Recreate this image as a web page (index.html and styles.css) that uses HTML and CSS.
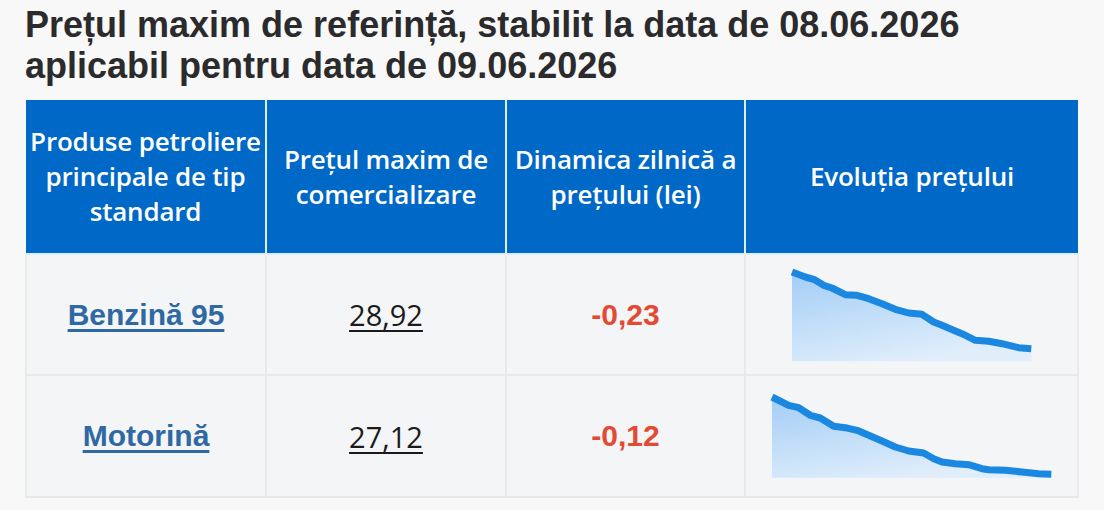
FILE: index.html
```html
<!DOCTYPE html>
<html lang="ro">
<head>
<meta charset="utf-8">
<title>Prețul maxim de referință</title>
<link rel="stylesheet" href="styles.css">
</head>
<body>
<div class="page">
  <h1 class="title">Prețul maxim de referință, stabilit la data de 08.06.2026<br>aplicabil pentru data de 09.06.2026</h1>
  <table class="prices">
    <colgroup>
      <col class="c1"><col class="c2"><col class="c3"><col class="c4">
    </colgroup>
    <thead>
      <tr>
        <th>Produse petroliere principale de tip standard</th>
        <th>Prețul maxim de comercializare</th>
        <th>Dinamica zilnică a prețului (lei)</th>
        <th>Evoluția prețului</th>
      </tr>
    </thead>
    <tbody>
      <tr class="r1">
        <td><a class="product" href="#">Benzină 95</a></td>
        <td><span class="price">28,92</span></td>
        <td><span class="delta">-0,23</span></td>
        <td class="chart-cell">
          <svg class="spark spark1" width="246" height="98" viewBox="-3 -3 246 98">
            <defs>
              <linearGradient id="g1" x1="0" y1="0" x2="0.5" y2="1">
                <stop offset="0" stop-color="#a3cdf6"/>
                <stop offset="1" stop-color="#e0eefb"/>
              </linearGradient>
            </defs>
            <path fill="url(#g1)" d="M0 3 L13.3 8 L21.7 10.3 L31.7 16.3 L40 19 L53.3 25.7 L65 26.3 L76.7 29.7 L90 34.7 L103.3 40.3 L116.7 44 L130 45.3 L141.7 53 L150 56.3 L163.3 62 L170 64.7 L183.3 71.3 L196.7 72.3 L210 74.7 L226.7 78.7 L239.3 79.7 L239.3 92.3 L0 92.3 Z"/>
            <path fill="none" stroke="#1a87e0" stroke-width="7" stroke-linejoin="round" stroke-linecap="butt" d="M0 3 L13.3 8 L21.7 10.3 L31.7 16.3 L40 19 L53.3 25.7 L65 26.3 L76.7 29.7 L90 34.7 L103.3 40.3 L116.7 44 L130 45.3 L141.7 53 L150 56.3 L163.3 62 L170 64.7 L183.3 71.3 L196.7 72.3 L210 74.7 L226.7 78.7 L239.3 79.7"/>
          </svg>
        </td>
      </tr>
      <tr class="r2">
        <td><a class="product" href="#">Motorină</a></td>
        <td><span class="price">27,12</span></td>
        <td><span class="delta">-0,12</span></td>
        <td class="chart-cell">
          <svg class="spark spark2" width="286" height="92" viewBox="-3 -3 286 92">
            <defs>
              <linearGradient id="g2" x1="0" y1="0" x2="0.5" y2="1">
                <stop offset="0" stop-color="#a3cdf6"/>
                <stop offset="1" stop-color="#e0eefb"/>
              </linearGradient>
            </defs>
            <path fill="url(#g2)" d="M0 4 L16.7 12.3 L26.7 14.7 L38.3 22.3 L48.3 25 L61.7 33.3 L73.3 34.7 L85 37.3 L96.7 42.3 L110 48 L123.3 54 L136.7 58 L151.7 60 L161.7 65.7 L170 69 L183.3 70.7 L196.7 71.7 L210 75.7 L216.7 76.7 L233.3 77.3 L250 79 L266.7 80.7 L279.3 81.3 L279.3 84.7 L0 84.7 Z"/>
            <path fill="none" stroke="#1a87e0" stroke-width="7" stroke-linejoin="round" stroke-linecap="butt" d="M0 4 L16.7 12.3 L26.7 14.7 L38.3 22.3 L48.3 25 L61.7 33.3 L73.3 34.7 L85 37.3 L96.7 42.3 L110 48 L123.3 54 L136.7 58 L151.7 60 L161.7 65.7 L170 69 L183.3 70.7 L196.7 71.7 L210 75.7 L216.7 76.7 L233.3 77.3 L250 79 L266.7 80.7 L279.3 81.3"/>
          </svg>
        </td>
      </tr>
    </tbody>
  </table>
</div>
</body>
</html>
```

FILE: styles.css
```css
html, body {
  margin: 0;
  padding: 0;
  background: #f8f8f8;
}

.page {
  padding: 4px 0 0 25px;
}

.title {
  margin: 0 0 14px 0;
  font-family: "Liberation Sans", Arial, sans-serif;
  font-weight: 700;
  font-size: 36px;
  line-height: 41px;
  color: #2b2b2d;
}

.prices {
  border-collapse: collapse;
  table-layout: fixed;
  width: 1052px;
}

.c1 { width: 240px; }
.c2 { width: 240px; }
.c3 { width: 239px; }
.c4 { width: 333px; }

.prices th {
  height: 153px;
  padding: 0;
  background: #0068c6;
  color: #ffffff;
  font-family: "Open Sans", "Noto Sans", sans-serif;
  font-weight: 600;
  font-size: 26px;
  line-height: 35px;
  letter-spacing: -0.2px;
  text-align: center;
  vertical-align: middle;
  border: 2px solid #dceff8;
  border-top: none;
}

.prices th:first-child { border-left: none; }
.prices th:last-child { border-right: none; }

.prices td {
  background: #f4f5f6;
  border: 2px solid #e8e9ea;
  text-align: center;
  vertical-align: middle;
  padding: 0;
}

.r1 td { height: 119px; }
.r2 td { height: 120px; }

.product {
  font-family: "Liberation Sans", Arial, sans-serif;
  font-weight: 700;
  font-size: 30px;
  color: #2f69a3;
  text-decoration: underline;
  text-decoration-thickness: 3px;
  text-underline-offset: 4px;
}

.price {
  font-family: "Open Sans", "Noto Sans", sans-serif;
  font-weight: 400;
  font-size: 29px;
  color: #1a1a1a;
  text-decoration: underline;
  text-decoration-thickness: 2px;
  text-underline-offset: 4px;
}

.delta {
  font-family: "Liberation Sans", Arial, sans-serif;
  font-weight: 700;
  font-size: 30px;
  color: #e24a33;
}

.chart-cell {
  text-align: left;
}

.spark {
  display: block;
}

.spark1 {
  margin: 0 0 0 43px;
}

.spark2 {
  margin: 0 0 0 23px;
}
```
